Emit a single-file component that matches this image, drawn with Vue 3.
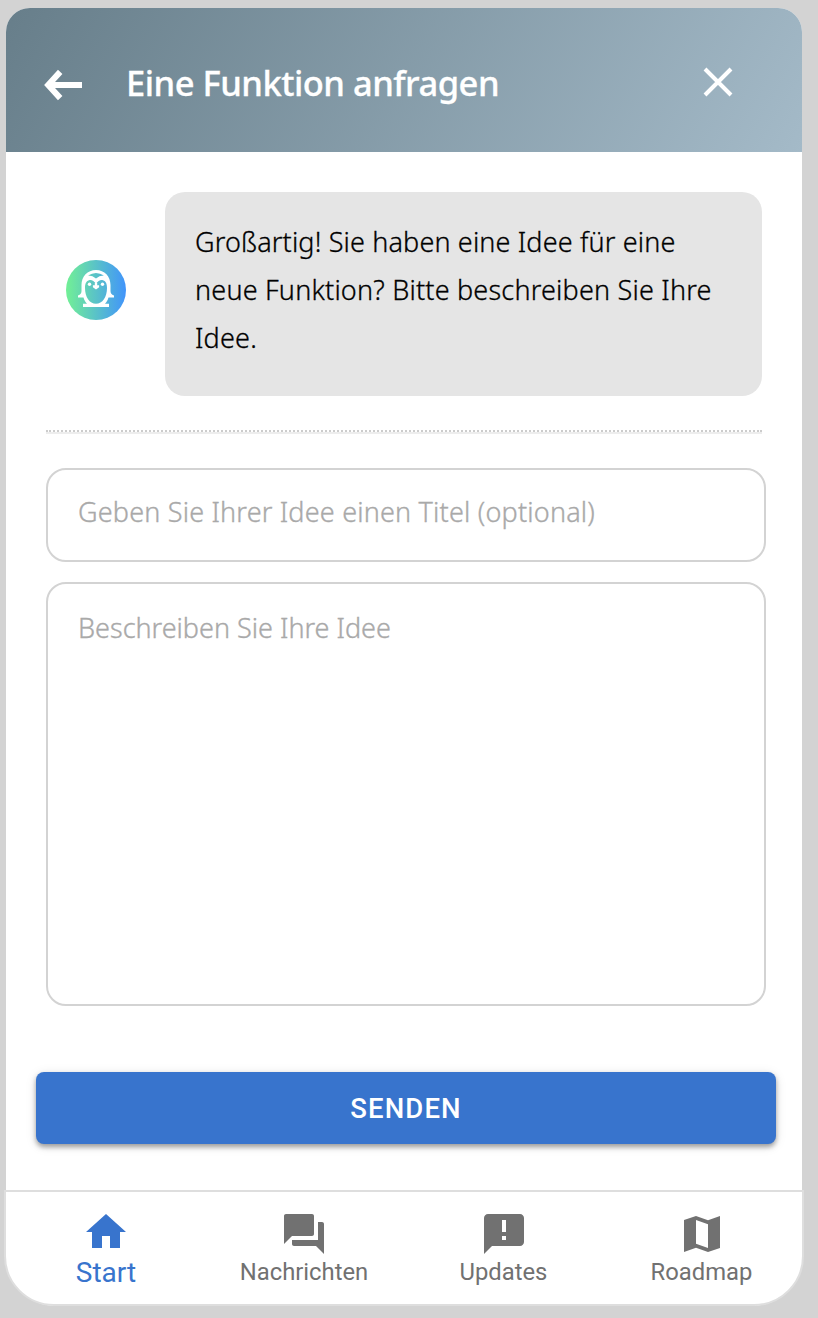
<script setup>
const tabs = [
  { label: 'Start', active: true, path: 'M10 20v-6h4v6h5v-8h3L12 3 2 12h3v8z' },
  { label: 'Nachrichten', path: 'M21 6h-2v9H6v2c0 .55.45 1 1 1h11l4 4V7c0-.55-.45-1-1-1zm-4 6V3c0-.55-.45-1-1-1H3c-.55 0-1 .45-1 1v14l4-4h10c.55 0 1-.45 1-1z' },
  { label: 'Updates', path: 'M20 2H4c-1.1 0-2 .9-2 2v18l4-4h14c1.1 0 2-.9 2-2V4c0-1.1-.9-2-2-2zm-7 9h-2V5h2v6zm0 4h-2v-2h2v2z' },
  { label: 'Roadmap', path: 'M21 3l-6 2.1L9 3 3 5v16l6-2.1 6 2.1 6-2V3zM15 19l-6-2.1V5l6 2.1V19z' }
]
</script>

<template>
  <div class="page">
    <main class="widget">
      <header class="header">
        <svg class="back" viewBox="0 0 40 32"><path d="M17.200 2.900 5.200 16l12 13.100M6 16h33" /></svg>
        <h1><span class="title">Eine Funktion anfragen</span></h1>
        <svg class="close" viewBox="0 0 30 30"><path d="M2 2l26 26M28 2 2 28" /></svg>
      </header>
      <section class="content">
        <div class="message">
          <svg class="avatar" viewBox="0 0 60 60">
            <defs>
              <linearGradient id="avatar-fill" gradientUnits="userSpaceOnUse" x1="0" y1="0" x2="60" y2="0">
                <stop offset="0" stop-color="#72f095" />
                <stop offset="1" stop-color="#4194fb" />
              </linearGradient>
            </defs>
            <circle cx="30" cy="30" r="30" fill="url(#avatar-fill)" />
            <path class="body" d="M30 10c-8.600 0-14.500 6.500-14.500 15v6c0 2-1 3.600-3.500 4.600v1.900h5.500c.8 2.700 1.900 4.600 3.500 6.300h-4V47h26v-3.200h-4c1.600-1.700 2.700-3.600 3.500-6.300H48v-1.900c-2.500-1-3.500-2.600-3.500-4.600v-6C44.500 16.500 38.600 10 30 10z" />
            <path fill="url(#avatar-fill)" d="M22 15.500Q30 10.500 38 15.500Q33.500 15.300 30 18.500Q26.500 15.300 22 15.500zM30 23.800c-2-3-4.600-4.400-7-3.600-3.200 1-4 4-4 7.700C19 37 23.500 43.700 30 43.700S41 37 41 27.900c0-3.700-.8-6.700-4-7.700-2.400-.8-5 .6-7 3.600z" />
            <circle class="body" cx="23.500" cy="24.300" r="1.700" />
            <circle class="body" cx="36.500" cy="24.300" r="1.700" />
            <path class="body" d="M28.800 23h2.400v2.300h1.900v1.900L30 29.500l-3.100-2.300v-1.900h1.900z" />
          </svg>
          <div class="bubble">
            <div class="first">Großartig! Sie haben eine Idee für eine</div>
            <div>neue Funktion? Bitte beschreiben Sie Ihre</div>
            <div>Idee.</div>
          </div>
        </div>
        <div class="divider"></div>
        <input class="field" placeholder="Geben Sie Ihrer Idee einen Titel (optional)" />
        <textarea class="field area" placeholder="Beschreiben Sie Ihre Idee"></textarea>
        <button class="send">SENDEN</button>
      </section>
      <nav class="tabs">
        <div v-for="tab in tabs" :key="tab.label" class="tab" :class="{ active: tab.active }">
          <svg viewBox="0 0 24 24"><path :d="tab.path" fill-rule="evenodd" /></svg>
          <span>{{ tab.label }}</span>
        </div>
      </nav>
    </main>
  </div>
</template>

<style>
body { background: #d3d3d3; }
</style>

<style scoped>
* { box-sizing: border-box; }
.page { height: 1318px; padding: 8px 16px 12px 6px; background: #d3d3d3; font-family: "Noto Sans", sans-serif; overflow: hidden; }
.widget { width: 796px; height: 1298px; display: flex; flex-direction: column; background: #fff; border-radius: 24px 24px 50px 50px; }
.header { height: 144px; flex: none; display: flex; align-items: flex-start; border-radius: 24px 24px 0 0; background: linear-gradient(120deg, #677e8a 0%, #a4bac8 100%); color: #fff; }
.back { width: 40px; height: 32px; margin: 61px 0 0 37px; fill: none; stroke: #fff; stroke-width: 6; }
h1 { flex: 1; margin: 50px 0 0 43px; font-size: 34.500px; line-height: 50px; font-weight: 500; white-space: nowrap; }
.title { letter-spacing: -.5px; -webkit-text-stroke: .3px; }
.close { width: 30px; height: 30px; margin: 59px 69px 0 0; fill: none; stroke: #fff; stroke-width: 4; }
.content { flex: 1; display: flex; flex-direction: column; padding: 40px 36px 0 40px; }
.message { display: flex; align-items: center; height: 204px; }
.avatar { width: 60px; height: 60px; margin: 0 39px 8px 20px; }
.body { fill: #fff; }
.bubble { width: 597px; height: 204px; padding: 26px 30px; border-radius: 20px; background: #e5e5e5; color: #000; font-size: 27px; line-height: 48px; font-weight: 300; letter-spacing: .2px; -webkit-text-stroke: .3px; white-space: nowrap; }
.first { letter-spacing: .15px; }
.divider { width: 716px; height: 4px; margin: 34px 0; border: 2px dotted #ccc; border-bottom: 2px solid #ededed; border-width: 2px 0; }
.field { display: block; width: 720px; height: 94px; flex: none; margin: 0; padding: 0 30px 8px; border: 2px solid #d3d3d3; border-radius: 20px; outline: 0; background: #fff; color: #000; font: 300 27px/40px "Noto Sans", sans-serif; letter-spacing: .19px; }
.field::placeholder { color: #a9a9a9; opacity: 1; -webkit-text-stroke: .35px #a9a9a9; }
.area { height: 424px; margin-top: 20px; padding-top: 24px; resize: none; letter-spacing: 0; }
.send { width: 740px; height: 72px; flex: none; margin: 66px 0 0 -10px; padding: 1px 0 0; border: 0; border-radius: 8px; background: #3874cd; color: #fff; font: 500 27.500px/71px Roboto, sans-serif; letter-spacing: 1.100px; box-shadow: 0 3px 5px rgba(0,0,0,.35), 0 2px 12px rgba(0,0,0,.1); }
.tabs { width: 800px; height: 116px; flex: none; display: grid; grid-template-columns: 200px 198px 199px 199px; margin-left: -2px; border: 2px solid #dedede; border-radius: 0 0 50px 50px; background: #fff; }
.tab { display: flex; flex-direction: column; align-items: center; padding-top: 18px; color: #717171; font: 400 23.800px/28px Roboto, sans-serif; }
.tab:nth-child(2) { margin-left: -1px; margin-right: 1px; }
.tab:nth-child(4) { margin-left: -1px; margin-right: 1px; }
.tab svg { width: 48px; height: 48px; fill: currentColor; }
.active { padding-top: 16px; color: #3874cd; font-size: 28px; line-height: 34px; }
</style>
